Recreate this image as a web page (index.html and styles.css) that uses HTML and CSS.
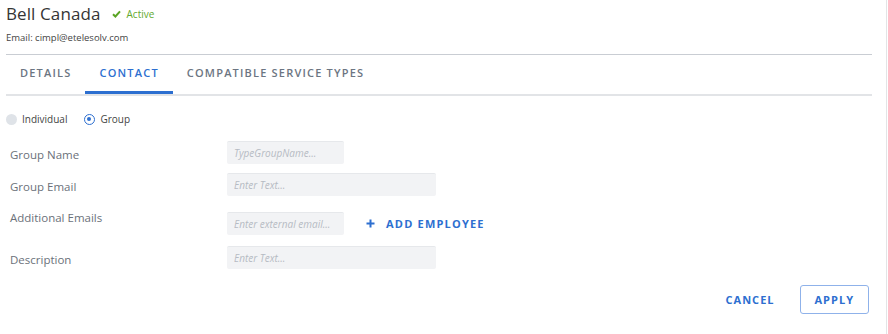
FILE: index.html
```html
<!DOCTYPE html>
<html lang="en">
<head>
    <meta charset="UTF-8">
    <meta name="viewport" content="width=device-width, initial-scale=1.0">
    <title>Bell Canada - Contact</title>
    <link rel="stylesheet" href="styles.css">
</head>
<body>
    <div class="page">
        <div class="header">
            <div class="title-row">
                <h1>Bell Canada</h1>
                <span class="status">
                    <svg class="status-icon" width="9" height="8" viewBox="0 0 9 8">
                        <path d="M1 4.2 L3.4 6.5 L8 1.3" fill="none" stroke="#5aa524" stroke-width="2"/>
                    </svg>
                    Active
                </span>
            </div>
            <div class="email">Email: cimpl@etelesolv.com</div>
        </div>

        <ul class="tabs">
            <li class="tab">Details</li>
            <li class="tab active">Contact</li>
            <li class="tab">Compatible Service Types</li>
        </ul>

        <div class="contact-form">
            <div class="radio-group">
                <label class="radio">
                    <span class="radio-dot"></span>
                    Individual
                </label>
                <label class="radio checked">
                    <span class="radio-dot"></span>
                    Group
                </label>
            </div>

            <div class="form-row row-name">
                <label class="field-label">Group Name</label>
                <input class="field short" type="text" placeholder="TypeGroupName...">
            </div>
            <div class="form-row row-email">
                <label class="field-label">Group Email</label>
                <input class="field" type="text" placeholder="Enter Text...">
            </div>
            <div class="form-row row-additional">
                <label class="field-label">Additional Emails</label>
                <input class="field short" type="text" placeholder="Enter external email...">
                <button class="link-btn add-btn">
                    <svg width="9" height="9" viewBox="0 0 9 9">
                        <path d="M4.5 0.5 V8.5 M0.5 4.5 H8.5" stroke="#2d6fd0" stroke-width="2"/>
                    </svg>
                    Add Employee
                </button>
            </div>
            <div class="form-row row-description">
                <label class="field-label">Description</label>
                <input class="field" type="text" placeholder="Enter Text...">
            </div>
        </div>

        <div class="actions">
            <button class="link-btn btn-cancel">Cancel</button>
            <button class="link-btn btn-apply">Apply</button>
        </div>
    </div>
</body>
</html>
```

FILE: styles.css
```css
* {
    margin: 0;
    padding: 0;
    box-sizing: border-box;
}

body {
    font-family: 'Open Sans', 'Noto Sans', sans-serif;
    background: #ffffff;
    color: #333;
}

.page {
    width: 887px;
    height: 334px;
    padding: 0 14px 0 6px;
    border-right: 1px solid #e3e4e6;
}

/* header */
.header {
    border-bottom: 1px solid #c9cdd3;
    height: 55px;
}

.title-row {
    display: flex;
    align-items: center;
    height: 26px;
}

h1 {
    font-size: 17px;
    font-weight: 400;
    color: #353535;
    letter-spacing: 0.1px;
}

.status {
    display: inline-flex;
    align-items: center;
    gap: 6px;
    margin-left: 11px;
    margin-top: 2px;
    font-size: 10px;
    color: #62a92e;
}

.email {
    font-size: 9.5px;
    color: #444;
    margin-top: 5px;
}

/* tabs */
.tabs {
    list-style: none;
    display: flex;
    border-bottom: 2px solid #e2e4e7;
    height: 41px;
}

.tab {
    padding: 0 14px;
    height: 39px;
    line-height: 36px;
    font-size: 11px;
    font-weight: 600;
    letter-spacing: 1.2px;
    text-transform: uppercase;
    color: #6c7582;
    border-bottom: 3px solid transparent;
}

.tab.active {
    color: #2d6fd0;
    border-bottom-color: #2d6fd0;
}

/* form */
.contact-form {
    padding-top: 15px;
}

.radio-group {
    display: flex;
    gap: 17px;
    height: 16px;
    align-items: center;
}

.radio {
    display: inline-flex;
    align-items: center;
    gap: 5px;
    font-size: 10px;
    color: #444;
}

.radio-dot {
    width: 11px;
    height: 11px;
    border-radius: 50%;
    background: #dfe3e8;
}

.radio.checked .radio-dot {
    background: #fff;
    border: 1.5px solid #2d6fd0;
    position: relative;
}

.radio.checked .radio-dot::after {
    content: '';
    position: absolute;
    top: 2px;
    left: 2px;
    width: 4px;
    height: 4px;
    border-radius: 50%;
    background: #2d6fd0;
}

.form-row {
    display: flex;
    align-items: flex-start;
    padding-left: 4px;
}

.row-name { margin-top: 14px; }
.row-email { margin-top: 9px; }
.row-additional { margin-top: 16px; align-items: center; }
.row-description { margin-top: 11px; }

.field-label {
    width: 217px;
    flex-shrink: 0;
    font-size: 11.5px;
    line-height: 16px;
    margin-top: 6px;
    color: #6b717a;
}

.row-additional .field-label {
    align-self: flex-start;
    margin-top: -2px;
}

.field {
    width: 209px;
    height: 23px;
    padding: 0 7px;
    background: #f2f3f5;
    border: none;
    border-top: 1px solid #e6e8eb;
    border-radius: 2px;
    font-family: inherit;
    font-size: 10px;
    outline: none;
}

.field.short {
    width: 117px;
}

.field::placeholder {
    color: #b6bbc3;
    font-style: italic;
}

/* buttons */
.link-btn {
    background: none;
    border: 1px solid transparent;
    font-family: inherit;
    font-size: 11px;
    font-weight: 700;
    letter-spacing: 1.2px;
    text-transform: uppercase;
    color: #2d6fd0;
    cursor: pointer;
}

.add-btn {
    display: inline-flex;
    align-items: center;
    gap: 11px;
    margin-left: 21px;
    padding: 0;
}

.actions {
    display: flex;
    justify-content: flex-end;
    gap: 10px;
    margin-top: 16px;
    padding-right: 3px;
}

.btn-cancel,
.btn-apply {
    height: 29px;
    padding: 0 14px;
    border-radius: 3px;
    letter-spacing: 1px;
}

.btn-apply {
    border-color: #8fb2ea;
}
```
